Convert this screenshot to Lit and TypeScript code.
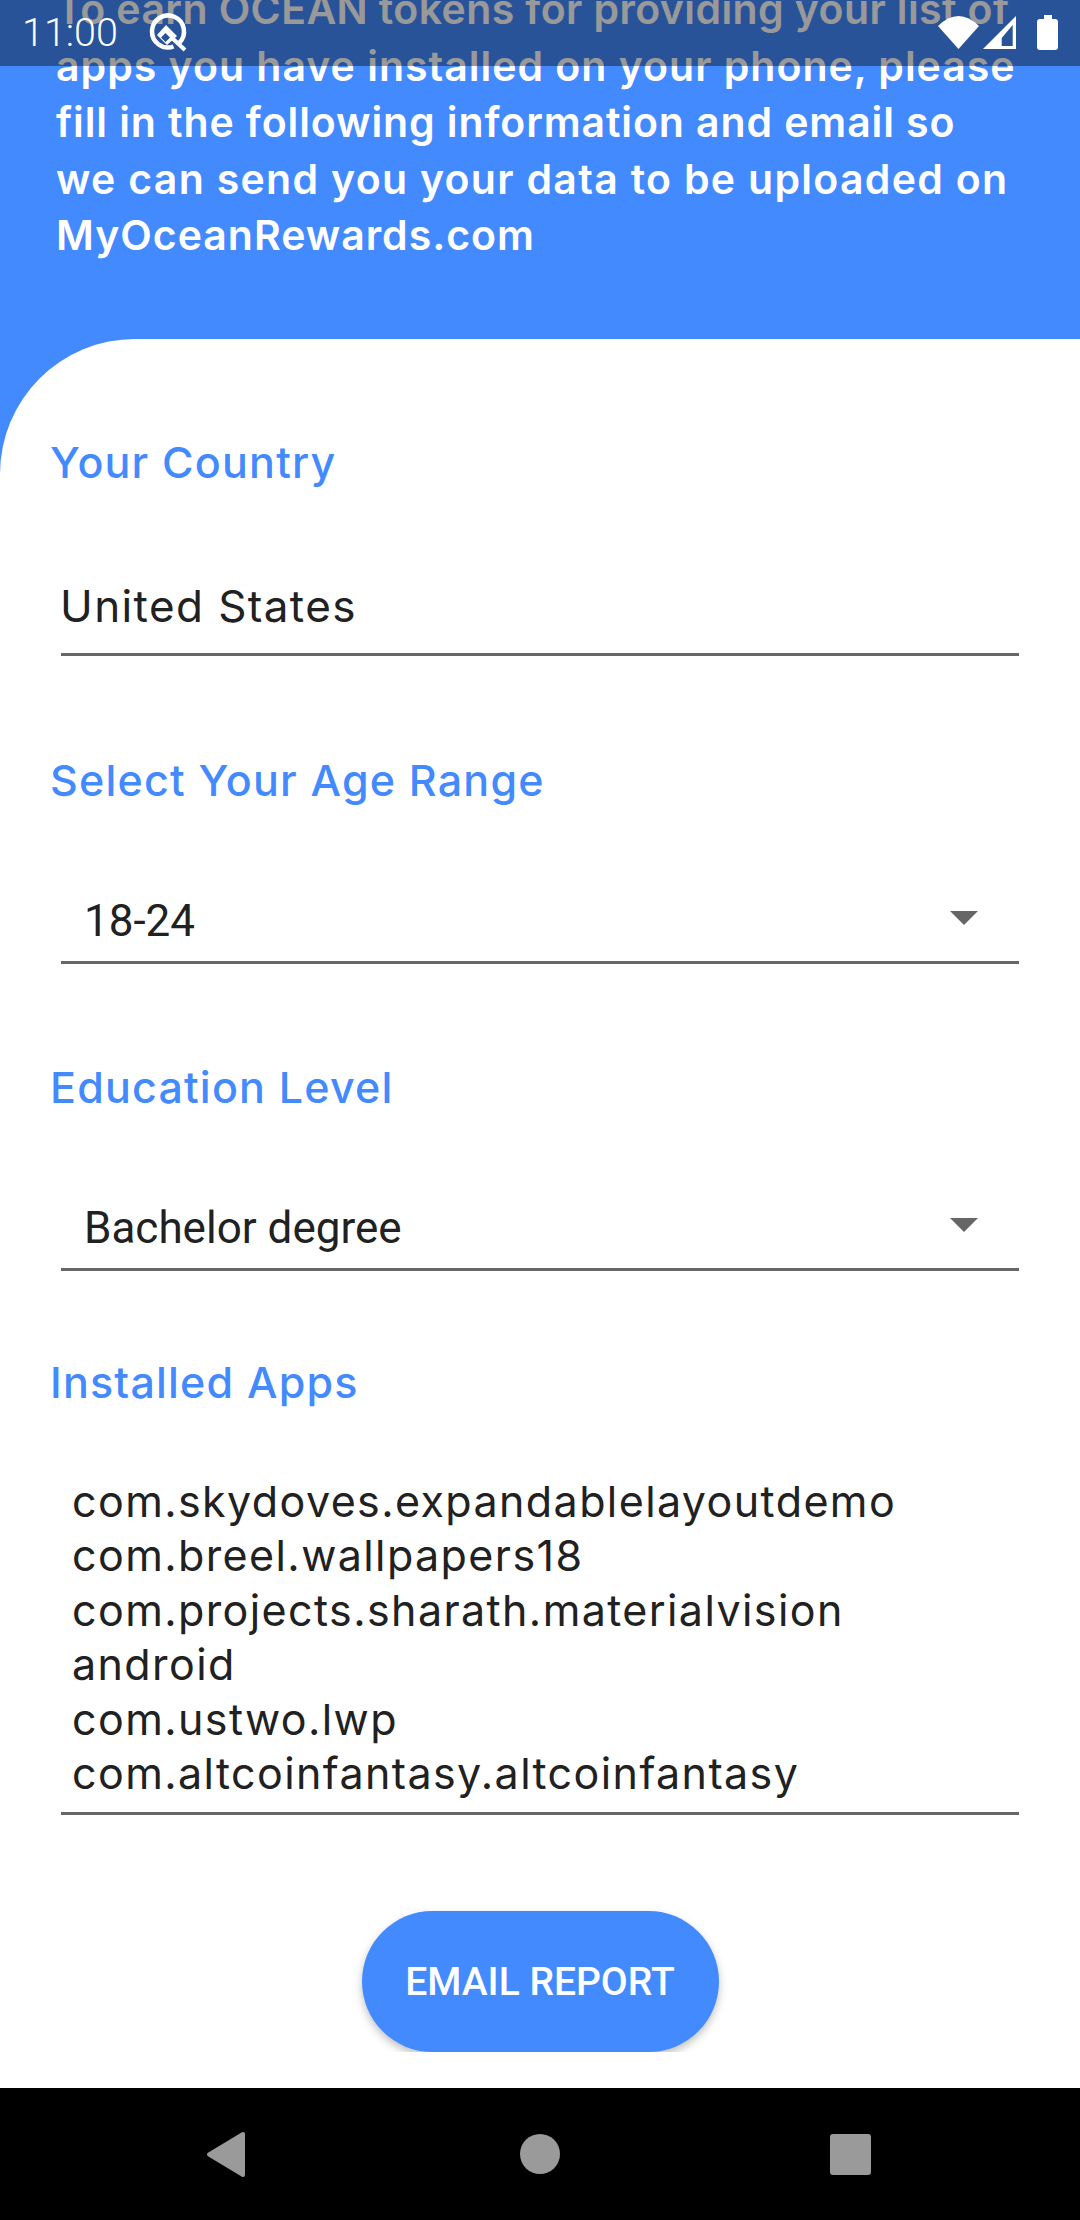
import { LitElement, html, css } from "lit";
import { customElement } from "lit/decorators.js";

const APPS = [
  "com.skydoves.expandablelayoutdemo",
  "com.breel.wallpapers18",
  "com.projects.sharath.materialvision",
  "android",
  "com.ustwo.lwp",
  "com.altcoinfantasy.altcoinfantasy",
];

@customElement("app-root")
export class AppRoot extends LitElement {
  static styles = css`
    :host { display: block; width: 1080px; height: 2220px; position: relative; overflow: hidden; background: #fff; font-family: Inter, "Liberation Sans", sans-serif; }
    .screen { height: 2088px; overflow: hidden; background: #448aff; }
    .hero { height: 339px; box-sizing: border-box; padding: 0 0 0 56px; overflow: hidden; }
    .hero p { margin: -19px 0 0; font-size: 41px; line-height: 56.6px; font-weight: 600; color: #fff; letter-spacing: 1px; white-space: nowrap; }
    .hero span { display: block; }
    .hero .tight { letter-spacing: 0.4px; }
    .hero .near { letter-spacing: 0.9px; }
    .hero .wide { letter-spacing: 1.3px; }
    .panel { height: 1749px; background: #fff; border-top-left-radius: 135px; box-sizing: border-box; padding: 98px 61px 0 50px; display: flex; flex-direction: column; }
    .label { font-size: 43px; line-height: 50px; color: #448aff; font-weight: 500; margin: 0; letter-spacing: 1.2px; }
    .field { margin-left: 11px; border-bottom: 3px solid #666; color: #212121; box-sizing: border-box; }
    .text { font-size: 44px; height: 86px; line-height: 60px; margin-top: 83px; letter-spacing: 1.4px; padding-top: 6px; text-indent: -1px; }
    .select { font-family: Roboto, sans-serif; font-size: 44px; height: 84px; margin-top: 75px; padding-left: 23px; padding-right: 41px; display: flex; justify-content: space-between; align-items: center; }
    .caret { width: 0; height: 0; border-left: 14px solid transparent; border-right: 14px solid transparent; border-top: 14px solid #666; margin-top: -5px; }
    .apps { font-size: 43px; line-height: 54.4px; letter-spacing: 1.4px; margin-top: 67px; padding: 0 0 12px 11px; white-space: pre-line; }
    .l2 { margin-top: 99px; }
    .l3 { margin-top: 98px; }
    .l4 { margin-top: 86px; }
    .btn-clip { align-self: center; margin: 90px 0 0 11px; padding: 6px 10px 0; overflow: hidden; }
    .btn { width: 357px; height: 141px; border-radius: 71px; background: #448aff; color: #fff; font: 500 39px Roboto, sans-serif; display: flex; align-items: center; justify-content: center; box-shadow: 0 4px 8px rgba(0,0,0,.25); }
    .status { position: absolute; inset: 0 0 auto 0; height: 66px; background: rgba(0,0,0,.4); color: #fff; }
    .time { position: absolute; left: 22px; top: 10px; font: 300 39.5px/46px Roboto, sans-serif; }
    .status svg { position: absolute; left: 0; top: 0; }
    .nav { height: 132px; background: #000; }
    .nav svg { display: block; }
  `;

  render() {
    return html`
      <div class="screen">
        <div class="hero"><p>
          <span class="tight">To earn OCEAN tokens for providing your list of</span>
          <span>apps you have installed on your phone, please</span>
          <span class="near">fill in the following information and email so</span>
          <span class="wide">we can send you your data to be uploaded on</span>
          <span>MyOceanRewards.com</span>
        </p></div>
        <div class="panel">
          <p class="label">Your Country</p>
          <div class="field text">United States</div>
          <p class="label l2">Select Your Age Range</p>
          <div class="field select"><span>18-24</span><span class="caret"></span></div>
          <p class="label l3">Education Level</p>
          <div class="field select"><span>Bachelor degree</span><span class="caret"></span></div>
          <p class="label l4">Installed Apps</p>
          <div class="field apps">${APPS.join("\n")}</div>
          <div class="btn-clip"><div class="btn">EMAIL REPORT</div></div>
        </div>
      </div>
      <div class="nav">
        <svg width="1080" height="132" viewBox="0 0 1080 132">
          <path d="M209 66.5 L243 46 V87 Z" fill="#9a9a9a" stroke="#9a9a9a" stroke-width="4" stroke-linejoin="round"/>
          <circle cx="540" cy="66" r="20" fill="#9a9a9a"/>
          <rect x="830" y="46" width="41" height="41" rx="3" fill="#9a9a9a"/>
        </svg>
      </div>
      <div class="status">
        <span class="time">11:00</span>
        <svg width="1080" height="66" viewBox="0 0 1080 66" fill="#fff">
          <path d="M179.3 42.8 A16 16 0 1 0 173.5 46.5" fill="none" stroke="#fff" stroke-width="4.5"/>
          <path fill-rule="evenodd" d="M166 25 L177 36 L167 45 L157 35 Z M165.5 33 L161 37.5 L165.5 42 L170 37.5 Z"/>
          <path d="M171 37 L185 50" fill="none" stroke="#fff" stroke-width="4"/>
          <path d="M938 26 Q958.5 6 979 26 L958.5 49 Z"/>
          <path fill-rule="evenodd" d="M1016 16 V49 H983 Z M1012.7 25 L1001.7 38 V46 H1012.7 Z"/>
          <path d="M1044 15 H1052 V19 H1055 A3 3 0 0 1 1058 22 V47 A3 3 0 0 1 1055 50 H1040 A3 3 0 0 1 1037 47 V22 A3 3 0 0 1 1040 19 H1044 Z"/>
        </svg>
      </div>
    `;
  }
}
